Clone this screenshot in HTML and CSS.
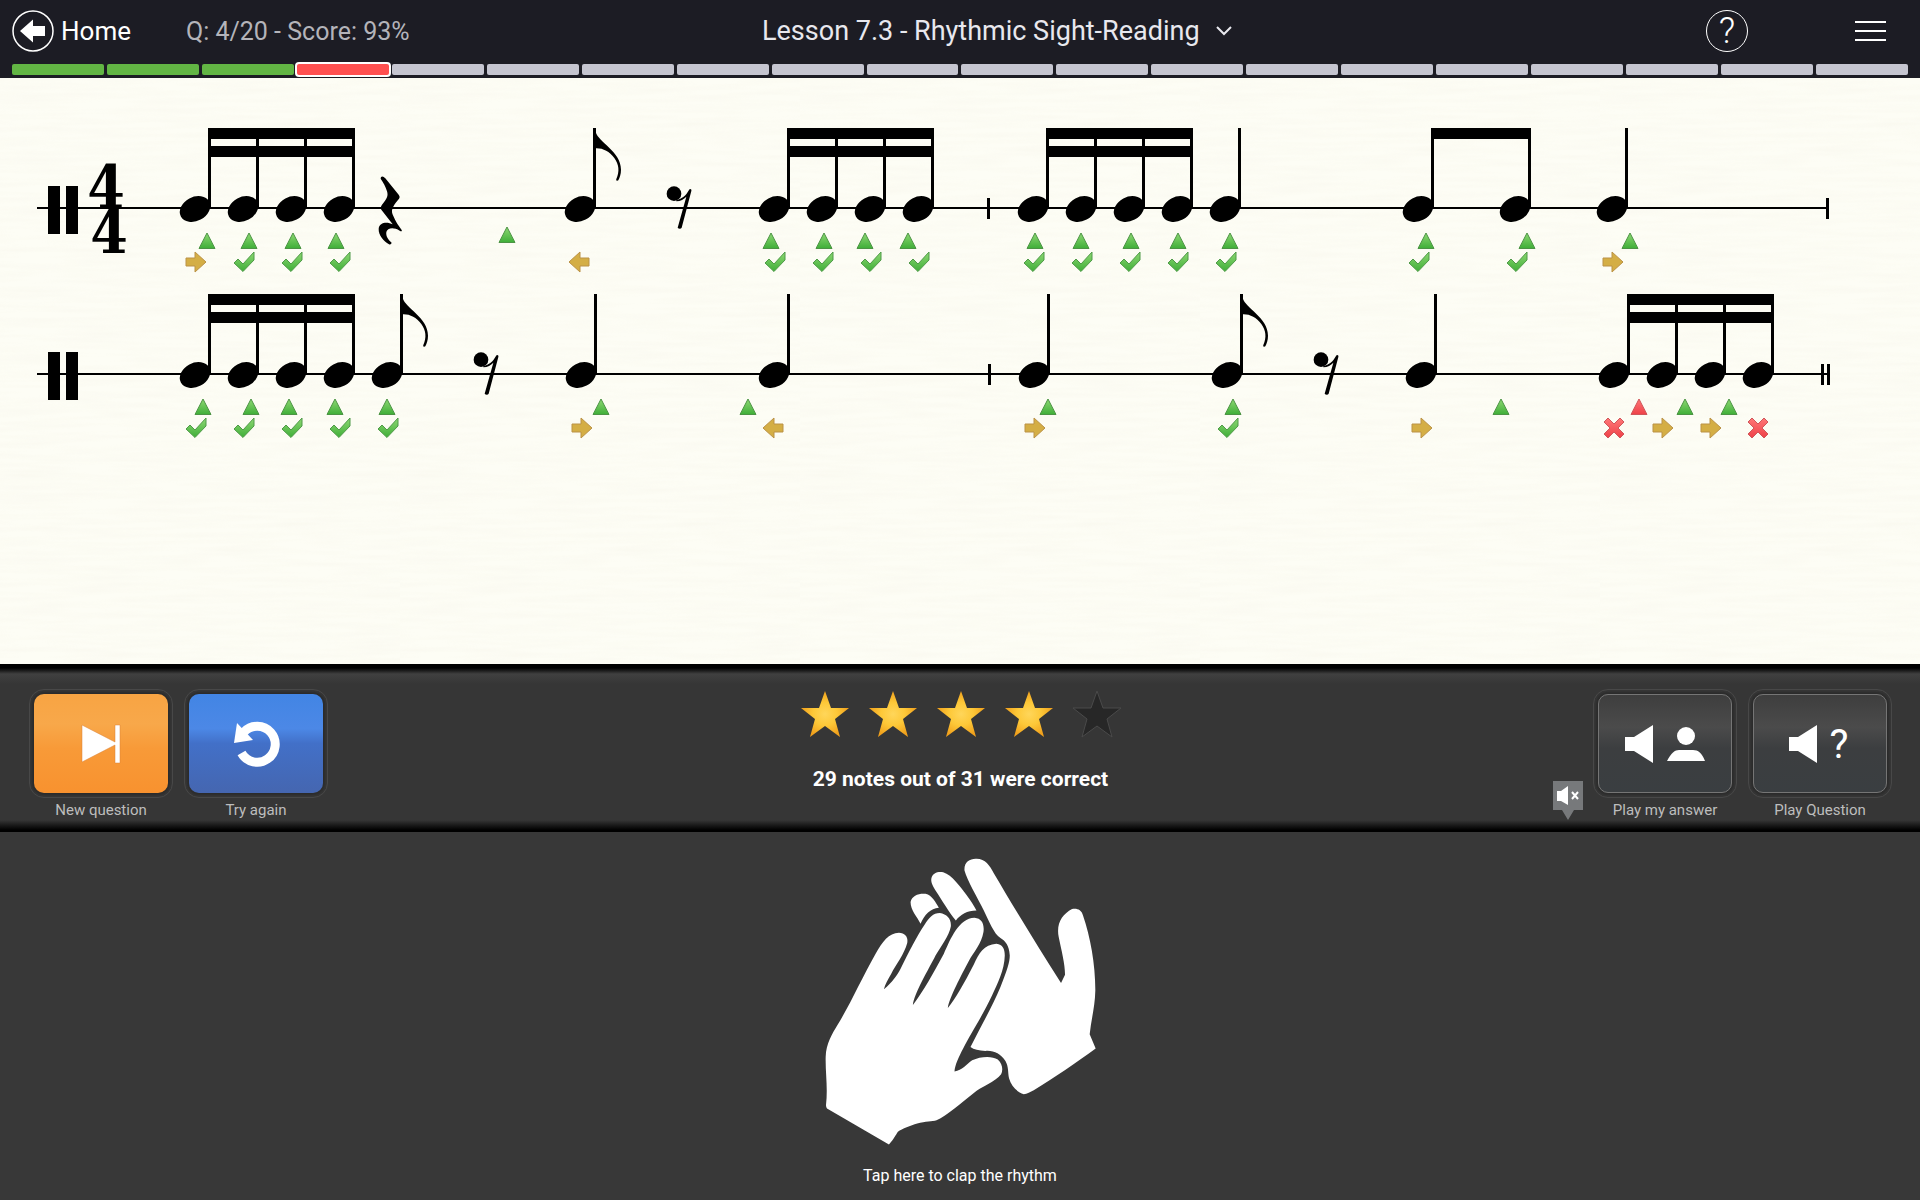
FILE: index.html
```
<!DOCTYPE html>
<html lang="en">

<head>
    <meta charset="UTF-8">
    <meta name="viewport" content="width=device-width, initial-scale=1.0">
    <title>Lesson 7.3 - Rhythmic Sight-Reading</title>
    <link rel="stylesheet" href="styles.css">
</head>

<body>
    <!-- shared shapes: notes, rests, marks -->
    <svg class="defs" width="0" height="0" aria-hidden="true">
        <defs>
            <linearGradient id="green" x1="0" y1="0" x2="0" y2="1">
                <stop offset="0" stop-color="#8ed873" />
                <stop offset="1" stop-color="#3fae38" />
            </linearGradient>
            <linearGradient id="red" x1="0" y1="0" x2="0" y2="1">
                <stop offset="0" stop-color="#f77" />
                <stop offset="1" stop-color="#ee4148" />
            </linearGradient>
            <radialGradient id="gold">
                <stop offset="0" stop-color="#ffd65a" />
                <stop offset="0.5" stop-color="#fdc838" />
                <stop offset="1" stop-color="#f0a01c" />
            </radialGradient>
            <g id="head">
                <ellipse cx="0" cy="1" rx="16" ry="12" transform="rotate(-28 0 1)" />
            </g>
            <g id="quarter">
                <use href="#head" />
                <rect x="13" y="-80" width="3" height="79" />
            </g>
            <g id="eighth">
                <use href="#quarter" />
                <path transform="translate(14 -80) scale(.3333)" d="M0 0 5 12C14 44 81 70 81 125C81 138 77 150 73 157C70 160 65 158 67 153C77 130 75 110 61 90C46 70 26 60 5 61Z" />
            </g>
            <g id="sixteenths">
                <use href="#quarter" />
                <use href="#quarter" x="48" />
                <use href="#quarter" x="96" />
                <use href="#quarter" x="144" />
                <rect x="14" y="-80" width="145" height="11" />
                <rect x="14" y="-62" width="145" height="11" />
            </g>
            <g id="rest4" transform="scale(.3333)">
                <path d="M-28-88C-28-98-19-96-14-89L26-40C31-33 29-30 24-24C6-2 2 8 10 24C16 40 26 54 35 66C37 71 33 71 29 68C10 56-8 60-11 72C-13 86-4 96 4 103C6 108 1 111-3 109C-19 99-35 82-34 62C-32 42-8 40 8 49L-26 5C-30 0-27-5-24-10C-8-28-5-38-9-50C-13-64-20-76-28-88Z" />
            </g>
            <g id="rest8" transform="scale(.3333)">
                <circle cx="-15" cy="-43" r="22" />
                <path d="M-8-24C10-28 20-36 30-54C32-59 39-57 37-51L8 59C6 63-1 63-4 59L22-34C14-26 6-21-8-20Z" />
            </g>
            <g id="tap">
                <path d="M0 25 8 40.500H-8Z" fill="url(#green)" stroke="#4c9444" />
            </g>
            <g id="extra">
                <path d="M0 25 8 40.500H-8Z" fill="url(#red)" stroke="#cf565a" />
            </g>
            <g id="ok">
                <path d="M-10 55-6 51-1 56 10 44V52L-1 63.500Z" fill="url(#green)" stroke="#4f9a48" />
            </g>
            <g id="late">
                <path d="M-10 50H-1V44L10 54-1 64V58H-10Z" fill="#d4ae45" stroke="#bb9247" />
            </g>
            <g id="early">
                <path d="M10 50H1V44L-10 54 1 64V58H10Z" fill="#d4ae45" stroke="#bb9247" />
            </g>
            <g id="miss">
                <path d="M-10 48-6 44 0 50 6 44 10 48 4 54 10 60 6 64 0 58-6 64-10 60-4 54Z" fill="url(#red)" stroke="#cf565a" />
            </g>
            <path id="star" d="M25 2 31 19 49 19 35 30 40 48 25 37 10 48 15 30 1 19 19 19Z" />
            <path id="speaker" d="M0 13H9L28 1V39L9 27H0Z" />
        </defs>
    </svg>

    <header class="topbar">
        <div class="topbar-left">
            <a class="home" href="#">
                <svg width="42" height="42" viewBox="0 0 42 42" aria-hidden="true">
                    <circle cx="21" cy="21" r="20" fill="none" stroke="#fff" stroke-width="1.500" />
                    <path d="M8 21 21 9.500V16H33V26H21V32.500Z" fill="#fff" />
                </svg>
                Home
            </a>
            <span class="score">Q: 4/20 - Score: 93%</span>
        </div>
        <button class="lesson" type="button">
            Lesson 7.3 - Rhythmic Sight-Reading
            <svg width="18" height="12" viewBox="0 0 18 12" aria-hidden="true">
                <path d="M2 2 9 9 16 2" fill="none" stroke="#e8e8ee" stroke-width="2" />
            </svg>
        </button>
        <div class="topbar-right">
            <button class="help" type="button" aria-label="Help">?</button>
            <button class="menu" type="button" aria-label="Menu">
                <svg width="32" height="22" viewBox="0 0 32 22" aria-hidden="true">
                    <path d="M0 2H31M0 11H31M0 20H31" stroke="#fff" stroke-width="2" />
                </svg>
            </button>
        </div>
    </header>

    <div class="progress">
        <i class="right"></i><i class="right"></i><i class="right"></i><i class="current"></i><i></i>
        <i></i><i></i><i></i><i></i><i></i>
        <i></i><i></i><i></i><i></i><i></i>
        <i></i><i></i><i></i><i></i><i></i>
    </div>

    <main class="paper">
        <!-- the staff line is y = 0 -->
        <svg class="staff" viewBox="0 -90 1920 166" role="img" aria-label="Bars 1 and 2">
            <rect x="37" y="-1" width="1791" height="2" />
            <rect x="48" y="-22" width="12" height="48" />
            <rect x="66" y="-22" width="12" height="48" />
            <text class="time" x="106" y="0">4</text>
            <text class="time" x="109" y="45">4</text>
            <use href="#sixteenths" x="195" />
            <use href="#rest4" x="390" />
            <use href="#eighth" x="580" />
            <use href="#rest8" x="679" />
            <use href="#sixteenths" x="774" />
            <rect x="987" y="-10" width="3" height="21" />
            <use href="#sixteenths" x="1033" />
            <use href="#quarter" x="1225" />
            <use href="#quarter" x="1418" />
            <use href="#quarter" x="1515" />
            <rect x="1431" y="-80" width="100" height="11" />
            <use href="#quarter" x="1612" />
            <rect x="1826" y="-10" width="3" height="21" />

            <use href="#tap" x="207" />
            <use href="#tap" x="249" />
            <use href="#tap" x="293" />
            <use href="#tap" x="336" />
            <use href="#tap" x="507" y="-6" />
            <use href="#tap" x="771" />
            <use href="#tap" x="824" />
            <use href="#tap" x="865" />
            <use href="#tap" x="908" />
            <use href="#tap" x="1035" />
            <use href="#tap" x="1081" />
            <use href="#tap" x="1131" />
            <use href="#tap" x="1178" />
            <use href="#tap" x="1230" />
            <use href="#tap" x="1426" />
            <use href="#tap" x="1527" />
            <use href="#tap" x="1630" />

            <use href="#late" x="196" />
            <use href="#ok" x="244" />
            <use href="#ok" x="292" />
            <use href="#ok" x="340" />
            <use href="#early" x="579" />
            <use href="#ok" x="775" />
            <use href="#ok" x="823" />
            <use href="#ok" x="871" />
            <use href="#ok" x="919" />
            <use href="#ok" x="1034" />
            <use href="#ok" x="1082" />
            <use href="#ok" x="1130" />
            <use href="#ok" x="1178" />
            <use href="#ok" x="1226" />
            <use href="#ok" x="1419" />
            <use href="#ok" x="1517" />
            <use href="#late" x="1613" />
        </svg>

        <svg class="staff" viewBox="0 -90 1920 166" role="img" aria-label="Bars 3 and 4">
            <rect x="37" y="-1" width="1791" height="2" />
            <rect x="48" y="-22" width="12" height="48" />
            <rect x="66" y="-22" width="12" height="48" />
            <use href="#sixteenths" x="195" />
            <use href="#eighth" x="387" />
            <use href="#rest8" x="486" />
            <use href="#quarter" x="581" />
            <use href="#quarter" x="774" />
            <rect x="988" y="-10" width="3" height="21" />
            <use href="#quarter" x="1034" />
            <use href="#eighth" x="1227" />
            <use href="#rest8" x="1326" />
            <use href="#quarter" x="1421" />
            <use href="#sixteenths" x="1614" />
            <rect x="1821" y="-10" width="3" height="21" />
            <rect x="1827" y="-10" width="3" height="21" />

            <use href="#tap" x="203" />
            <use href="#tap" x="251" />
            <use href="#tap" x="289" />
            <use href="#tap" x="335" />
            <use href="#tap" x="387" />
            <use href="#tap" x="601" />
            <use href="#tap" x="748" />
            <use href="#tap" x="1048" />
            <use href="#tap" x="1233" />
            <use href="#tap" x="1501" />
            <use href="#extra" x="1639" />
            <use href="#tap" x="1685" />
            <use href="#tap" x="1729" />

            <use href="#ok" x="196" />
            <use href="#ok" x="244" />
            <use href="#ok" x="292" />
            <use href="#ok" x="340" />
            <use href="#ok" x="388" />
            <use href="#late" x="582" />
            <use href="#early" x="773" />
            <use href="#late" x="1035" />
            <use href="#ok" x="1228" />
            <use href="#late" x="1422" />
            <use href="#miss" x="1614" />
            <use href="#late" x="1663" />
            <use href="#late" x="1711" />
            <use href="#miss" x="1758" />
        </svg>
    </main>

    <section class="panel">
        <div class="actions">
            <button class="action" type="button">
                <span class="face orange">
                    <svg width="40" height="40" viewBox="0 0 40 40" aria-hidden="true">
                        <path d="M1 1 34 18V1H39V39H34V21L1 38Z" fill="#fff" stroke="#d9823a" stroke-width="0.500" />
                    </svg>
                </span>
                New question
            </button>
            <button class="action" type="button">
                <span class="face blue">
                    <svg width="48" height="48" viewBox="0 0 48 48" aria-hidden="true">
                        <path d="M12 12A18 18 0 1 1 9.500 33" fill="none" stroke="#fff" stroke-width="9" />
                        <path d="M5 3 2 23 21 20Z" fill="#fff" />
                    </svg>
                </span>
                Try again
            </button>
        </div>

        <div class="result">
            <div class="stars" role="img" aria-label="4 out of 5 stars">
                <svg width="50" height="50"><use href="#star" class="on" /></svg>
                <svg width="50" height="50"><use href="#star" class="on" /></svg>
                <svg width="50" height="50"><use href="#star" class="on" /></svg>
                <svg width="50" height="50"><use href="#star" class="on" /></svg>
                <svg width="50" height="50"><use href="#star" class="off" /></svg>
            </div>
            <p>29 notes out of 31 were correct</p>
        </div>

        <div class="actions playback">
            <button class="mute" type="button" aria-label="Mute">
                <svg width="30" height="39" viewBox="0 0 30 39" aria-hidden="true">
                    <path d="M0 0H30V29H21L15 39 9 29H0Z" fill="#77797b" />
                    <path d="M4 10H8L15 5V24L8 20H4Z" fill="#fff" />
                    <path d="M19 11 25 18M25 11 19 18" stroke="#fff" stroke-width="2" />
                </svg>
            </button>
            <button class="action" type="button">
                <span class="face dark">
                    <svg width="80" height="40" viewBox="0 0 80 40" aria-hidden="true">
                        <use href="#speaker" fill="#fff" />
                        <circle cx="61" cy="12" r="9" fill="#fff" />
                        <path d="M42 37C46 29 50 26 54 26H68C73 26 77 29 80 37Z" fill="#fff" />
                    </svg>
                </span>
                Play my answer
            </button>
            <button class="action" type="button">
                <span class="face dark">
                    <svg class="ask" width="62" height="40" viewBox="0 0 62 40" aria-hidden="true">
                        <use href="#speaker" fill="#fff" />
                        <text class="question" x="50" y="34">?</text>
                    </svg>
                </span>
                Play Question
            </button>
        </div>
    </section>

    <button class="clap" type="button">
        <svg width="273" height="290" viewBox="70 50 820 870" fill="#fff" aria-hidden="true">
            <path d="M265 913 79 805Q76 801 76 795C82 740 74 700 75 650C76 610 95 580 110 555C150 490 185 410 225 340C245 305 265 277 295 277C315 279 323 290 320 308C312 340 285 375 272 400C262 418 253 432 250 447C275 425 290 405 300 385C325 335 350 285 372 253C385 232 398 218 418 218C440 222 453 236 451 258C446 285 420 320 405 345C385 385 340 460 337 494C370 450 395 405 430 340C450 295 475 234 522 232C545 234 552 252 549 275C543 310 520 335 505 362C485 400 445 475 442 503C465 475 490 430 520 372C535 340 550 312 588 310C607 313 613 325 613 345C612 390 590 430 575 465C550 520 510 580 488 625C475 650 463 675 462 694C485 690 498 672 515 660C540 648 575 646 592 658C607 672 608 690 602 702C585 725 540 740 520 758C480 790 440 825 408 840C395 845 375 842 350 850C330 856 305 865 292 875C285 885 280 897 265 913Z" />
            <path d="M510 620C540 560 575 500 600 440C620 390 628 365 628 345C626 315 615 302 600 293C580 280 565 240 550 210C530 170 500 120 492 90C490 65 508 54 528 55C555 55 567 75 580 98C640 200 710 315 782 428L794 403C794 370 783 330 775 290C767 250 785 222 815 206C830 203 843 208 848 225C870 290 885 370 885 450C884 500 872 540 868 582L886 625C830 665 760 715 700 750C690 755 680 762 670 762C650 755 632 738 626 715C622 695 625 680 615 662C600 640 580 630 555 632C535 630 520 628 510 620Z" />
            <path d="M466 240C445 215 425 180 405 150C395 135 390 122 393 112C397 97 412 92 428 95C455 103 480 140 497 162C510 180 520 195 528 210C500 210 480 222 466 240Z" />
            <path d="M360 250C350 230 330 210 330 185C334 165 355 158 375 160C395 165 405 185 415 202C390 205 372 222 360 250Z" />
        </svg>
        Tap here to clap the rhythm
    </button>
</body>

</html>
```
FILE: styles.css
```
* {
    box-sizing: border-box;
}

body {
    margin: 0;
    min-height: 100vh;
    display: flex;
    flex-direction: column;
    font-family: Roboto, "Liberation Sans", sans-serif;
    background: #383838;
    color: #fff;
}

button {
    margin: 0;
    padding: 0;
    border: 0;
    background: none;
    color: inherit;
    font: inherit;
    cursor: pointer;
}

.defs {
    position: absolute;
}

.topbar {
    display: grid;
    grid-template-columns: 40% 1fr auto;
    align-items: center;
    height: 64px;
    padding: 0 33px 2px 12px;
    background: #1c1c24;
    font-size: 26px;
}

.topbar-left,
.topbar-right,
.home,
.lesson {
    display: flex;
    align-items: center;
}

.topbar-left {
    gap: 55px;
}

.home {
    gap: 7px;
    color: #fff;
    text-decoration: none;
}

.score {
    color: #b4b4ba;
    font-size: 25px;
}

.lesson {
    gap: 15px;
    color: #e8e8ee;
    font-size: 27px;
}

.topbar-right {
    gap: 107px;
}

.help {
    width: 42px;
    height: 42px;
    border: 1px solid #fff;
    border-radius: 50%;
    font-size: 36px;
    font-weight: 300;
    line-height: 40px;
}

.menu svg {
    display: block;
}

.progress {
    display: grid;
    grid-template-columns: repeat(20, 1fr);
    gap: 3px;
    height: 14px;
    padding: 0 12px 3px;
    background: #1c1c24;
}

.progress i {
    background: #c5c5d0;
    border-radius: 2px;
}

.progress .right {
    background: #62b544;
}

.progress .current {
    background: #ff5050;
    box-shadow: 0 0 0 2px #fff;
}

/* paper with faint horizontal fibres */
.paper {
    flex: 1;
    padding-top: 40px;
    background-color: #fdfdf5;
    background-image: url("data:image/svg+xml,%3Csvg xmlns='http://www.w3.org/2000/svg' width='400' height='400'%3E%3Cfilter id='f'%3E%3CfeTurbulence type='fractalNoise' baseFrequency='.015 .2' numOctaves='2' stitchTiles='stitch'/%3E%3CfeColorMatrix values='0 0 0 0 .8 0 0 0 0 .75 0 0 0 0 .6 .2 0 0 0 -.07'/%3E%3C/filter%3E%3Crect width='400' height='400' filter='url(%23f)'/%3E%3C/svg%3E");
}

.staff {
    display: block;
    width: 100%;
    height: auto;
}

.time {
    font-family: "DejaVu Serif Condensed", "DejaVu Serif", serif;
    font-size: 60px;
    font-weight: bold;
    text-anchor: middle;
}

.panel {
    display: grid;
    grid-template-columns: 1fr auto 1fr;
    height: 168px;
    padding: 30px 33px 0 34px;
    background: linear-gradient(#000 0, #000 4px, #404040 10px, #363636 20px, #363636 156px, #000 166px);
}

.actions {
    display: flex;
    gap: 21px;
}

.playback {
    justify-content: flex-end;
}

.action {
    align-self: flex-start;
    width: 134px;
    color: #bdbdbd;
    font-size: 15px;
    line-height: 18px;
}

.face {
    display: flex;
    align-items: center;
    justify-content: center;
    height: 99px;
    margin-bottom: 8px;
    border-radius: 10px;
    outline: 1px solid #484848;
    outline-offset: 4px;
    box-shadow: 0 0 2px 2px #2c2c2c;
}

.orange {
    background: linear-gradient(#f8a443, #f8a84a 30%, #f89a38 55%, #f8922f);
}

.blue {
    background: linear-gradient(#4285e4, #4c88e6 35%, #4270c8 50%, #4566b0);
}

.dark {
    border: 1px solid #757575;
    background: linear-gradient(#3e3e3e, #4b4b4b 33%, #3c3e40 55%, #3a3e41);
}

.ask {
    overflow: visible;
}

.question {
    fill: #fff;
    font-size: 40px;
    text-anchor: middle;
}

.result {
    text-align: center;
}

.stars {
    display: flex;
    justify-content: center;
    gap: 18px;
    margin-top: -5px;
}

.on {
    fill: url(#gold);
}

.off {
    fill: #272727;
    stroke: #4a4a4a;
}

.result p {
    margin: 28px 0 0;
    font-size: 21px;
    line-height: 24px;
    font-weight: bold;
}

.mute {
    align-self: flex-end;
    margin-right: -6px;
    padding-bottom: 12px;
}

.mute svg {
    display: block;
}

.clap {
    display: flex;
    flex-direction: column;
    align-items: center;
    gap: 19px;
    padding: 25px 0 14px;
    font-size: 16px;
    line-height: 20px;
}
```
